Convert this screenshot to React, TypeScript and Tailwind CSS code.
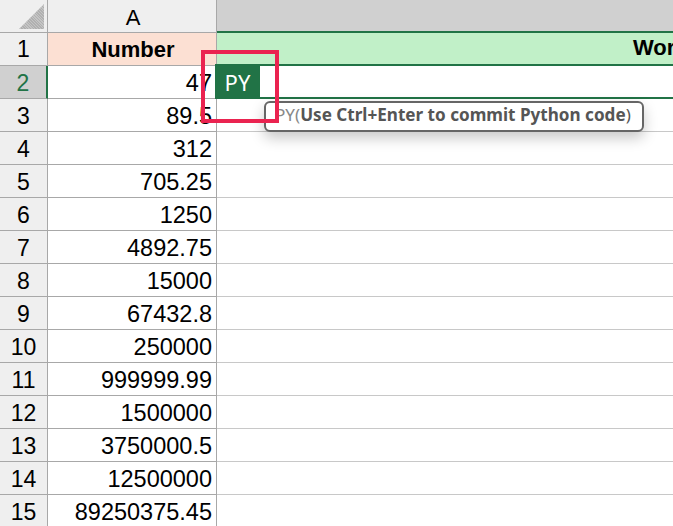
const values = ['47', '89.5', '312', '705.25', '1250', '4892.75', '15000', '67432.8', '250000', '999999.99', '1500000', '3750000.5', '12500000', '89250375.45']

export default function App() {
  return (
    <div className="relative h-[526px] w-[673px] overflow-hidden bg-white font-['Liberation_Sans',sans-serif] text-[22px] text-black">
      {/* column headers */}
      <div className="flex h-[33px] border-b border-[#a8a8a8]">
        <div className="relative w-[48px] shrink-0 border-r border-[#a8a8a8] bg-[#efefef]">
          <div className="absolute bottom-[3px] right-[3px] h-[25px] w-[25px] bg-[repeating-linear-gradient(45deg,#b0b0b0_0,#b0b0b0_1px,#c4c4c4_1px,#c4c4c4_2px)] [clip-path:polygon(100%_0,100%_100%,0_100%)]" />
        </div>
        <div className="flex w-[169px] shrink-0 items-center justify-center border-r border-[#a8a8a8] bg-[#efefef] pl-[2px] pt-[3px]">A</div>
        <div className="flex-1 bg-[#d0d0d0]" />
      </div>

      {/* row 1 */}
      <div className="flex h-[33px]">
        <div className="flex w-[48px] shrink-0 items-center justify-center border-r border-b border-[#a8a8a8] bg-[#efefef] pt-[1px] text-[23px]">1</div>
        <div className="flex w-[169px] shrink-0 items-center justify-center border-r border-b border-[#a8a8a8] bg-[#fce0d3] pl-[2px] font-bold">Number</div>
        <div className="-mt-[2px] h-[35px] flex-1 overflow-hidden whitespace-nowrap border-y-2 border-[#217346] bg-[#c1f0c8] pl-[416px] font-bold leading-[29px]">Word</div>
      </div>

      {/* data rows */}
      {values.map((value, i) => (
        <div key={value} className="flex h-[33px] text-[23.5px]">
          <div
            className={
              i === 0
                ? 'flex w-[48px] shrink-0 items-center justify-center border-r-2 border-b border-r-[#217346] border-b-[#a8a8a8] bg-[#d0d0d0] pt-[3px] text-[23px] text-[#217346]'
                : 'flex w-[48px] shrink-0 items-center justify-center border-r border-b border-[#a8a8a8] bg-[#efefef] pt-[3px] text-[23px]'
            }
          >
            {i + 2}
          </div>
          <div className="flex w-[169px] shrink-0 items-center justify-end border-r border-b border-[#a8a8a8] pr-[4px] pt-[3px]">{value}</div>
          <div className={i === 0 ? 'flex-1 border-b-2 border-[#217346]' : 'flex-1 border-b border-[#c8c8c8]'} />
        </div>
      ))}

      {/* formula chip */}
      <div className="absolute left-[215px] top-[64px] flex h-[35px] w-[45px] items-center justify-center bg-[#217346] pt-[1px] font-['Noto_Sans',sans-serif] text-[22px] text-white">PY</div>

      {/* autocomplete tooltip */}
      <div className="absolute left-[264px] top-[101px] flex h-[31px] w-[380px] items-center whitespace-nowrap rounded-[6px] border-2 border-[#666666] bg-white pb-[3px] pl-[9px] font-['Noto_Sans',sans-serif] text-[17.1px] text-[#555555] shadow-[0_6px_14px_rgba(0,0,0,0.22)]">
        <span className="font-normal text-[#888888]">PY(</span>
        <span className="font-bold">Use Ctrl+Enter to commit Python code</span>
        <span className="font-normal">)</span>
      </div>

      {/* red annotation box */}
      <div className="absolute left-[201px] top-[50px] h-[73px] w-[78px] border-[4px] border-[#ea2350]" />
    </div>
  )
}
